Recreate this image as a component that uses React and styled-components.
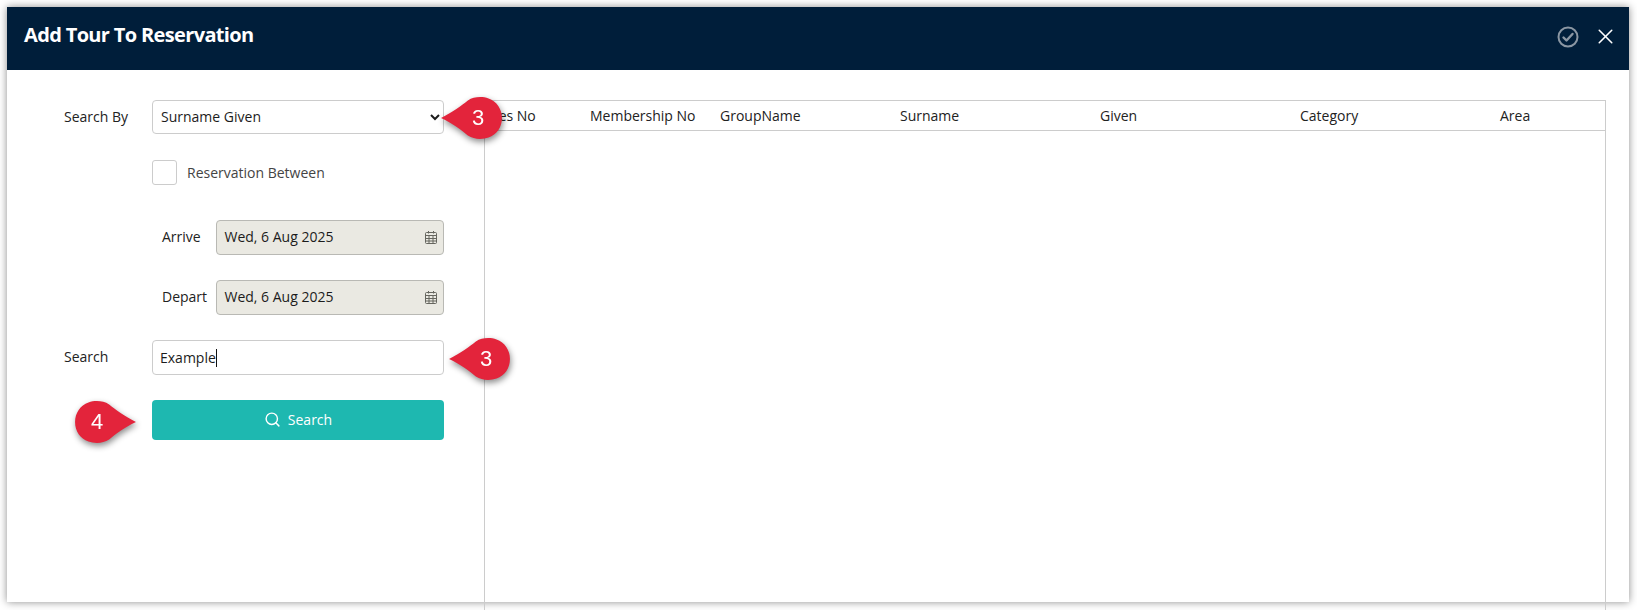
import React from 'react'
import styled, { createGlobalStyle } from 'styled-components'
import { Search, X } from 'lucide-react'

const GlobalStyle = createGlobalStyle`
  html, body {
    margin: 0;
    padding: 0;
    background: #fff;
    font-family: "Open Sans", "Liberation Sans", sans-serif;
    font-size: 14px;
    color: #1c1c1c;
  }
  * { box-sizing: border-box; }
`

const Page = styled.div`
  position: relative;
  width: 1637px;
  height: 610px;
  padding: 7px 8px 8px 7px;
  overflow: hidden;
`

const Dialog = styled.div`
  display: flex;
  flex-direction: column;
  height: 595px;
  background: #fff;
  box-shadow: 0 0 8px rgba(0, 0, 0, 0.45);
`

const Header = styled.header`
  display: flex;
  align-items: center;
  justify-content: space-between;
  height: 63px;
  padding: 0 11px 4px 17px;
  background: #001e3a;
  color: #fff;
`

const Title = styled.h1`
  margin: 0 0 5px;
  font-size: 20px;
  font-weight: 700;
  letter-spacing: -0.65px;
`

const HeaderActions = styled.div`
  display: flex;
  align-items: center;
  gap: 13px;
`

const Content = styled.div`
  display: flex;
  flex: 1;
  min-height: 0;
`

const FormPanel = styled.div`
  flex: none;
  display: flex;
  flex-direction: column;
  width: 477px;
  padding: 30px 0 0 57px;
`

const Row = styled.div`
  display: flex;
  align-items: center;
  height: ${(props) => props.$height || 34}px;
  margin-top: ${(props) => props.$top || 0}px;
  padding-left: ${(props) => props.$indent || 0}px;
`

const Label = styled.label`
  flex: none;
  width: ${(props) => props.$width || 88}px;
  padding-bottom: 2px;
  color: #222;
`

const Select = styled.select`
  width: 292px;
  height: 34px;
  padding: 0 2px 2px 4px;
  border: 1px solid #ccc;
  border-radius: 4px;
  background: #fff;
  font: inherit;
  color: #1c1c1c;
  outline: none;
`

const CheckBox = styled.span`
  flex: none;
  width: 25px;
  height: 25px;
  border: 1px solid #ccc;
  border-radius: 3px;
  background: #fff;
`

const CheckLabel = styled.span`
  margin-left: 10px;
  color: #444;
`

const DateField = styled.div`
  display: flex;
  align-items: center;
  justify-content: space-between;
  width: 228px;
  height: 35px;
  padding: 0 5px 2px 7.5px;
  border: 1px solid #b9b9b4;
  border-radius: 4px;
  background: #eae9e2;
  color: #1c1c1c;
`

const TextField = styled.div`
  display: flex;
  align-items: center;
  width: 292px;
  height: 35px;
  padding: 0 7px;
  border: 1px solid #ccc;
  border-radius: 4px;
  background: #fff;
`

const Caret = styled.span`
  width: 1px;
  height: 18px;
  background: #111;
`

const SearchButton = styled.button`
  display: flex;
  align-items: center;
  justify-content: center;
  gap: 7px;
  width: 292px;
  height: 40px;
  padding: 0 0 2px;
  border: 0;
  border-radius: 4px;
  background: #1eb8b0;
  color: #fff;
  font: inherit;
`

const TablePanel = styled.div`
  flex: none;
  width: 1122px;
  height: 100%;
  margin-top: 30px;
  border: 1px solid #ccc;
  border-bottom: 0;
`

const TableHead = styled.div`
  display: grid;
  grid-template-columns: 105px 130px 180px 200px 200px 200px 1fr;
  align-items: center;
  height: 30px;
  border-bottom: 1px solid #ccc;
  font-weight: 500;
  color: #222;
`

const HeadCell = styled.span`
  white-space: nowrap;
  padding-left: ${(props) => props.$pad || 0}px;
`

const MarkerWrap = styled.div`
  position: absolute;
  left: ${(props) => props.$x}px;
  top: ${(props) => props.$y}px;
  width: 64px;
  height: 44px;
  filter: drop-shadow(1px 3px 3px rgba(0, 0, 0, 0.45));
`

const MarkerNumber = styled.span`
  position: absolute;
  top: 0;
  left: ${(props) => (props.$flip ? 13 : 27)}px;
  width: 22px;
  line-height: 43px;
  text-align: center;
  font-family: "Liberation Sans", Arial, sans-serif;
  font-size: 22px;
  color: #fff;
`

// teardrop callout, tip on the left unless flipped
const Marker = ({ x, y, n, flip }) => (
  <MarkerWrap $x={x} $y={y}>
    <svg width="64" height="44" viewBox="0 0 62 42" style={{ display: 'block' }}>
      <path
        transform={flip ? 'translate(62 0) scale(-1 1)' : undefined}
        d="M1 21 C12 15 21 9 27 4 C33 0 41 0 47 2 C55 5 60 12 60 21 C60 30 55 37 47 40 C41 42 33 42 27 38 C21 33 12 26 1 21 Z"
        fill="#e3243b"
      />
    </svg>
    <MarkerNumber $flip={flip}>{n}</MarkerNumber>
  </MarkerWrap>
)

const CalendarIcon = () => (
  <svg width="14" height="16" viewBox="0 0 14 16" fill="none" stroke="#66665f" strokeWidth="1">
    <rect x="1.5" y="3.5" width="11" height="11" rx="1" />
    <path d="M1.5 6.5h11M1.5 9.5h11M1.5 12h11M5 6.5v8M9 6.5v8M4.5 2v2.5M9.5 2v2.5" />
  </svg>
)

const ConfirmIcon = () => (
  <svg width="24" height="24" viewBox="0 0 24 24" fill="none" stroke="#8b97a3" strokeWidth="2">
    <circle cx="12" cy="12" r="9.5" />
    <path d="M7.5 12.5l3 3 6-6.5" strokeWidth="2.4" strokeLinecap="round" strokeLinejoin="round" />
  </svg>
)

const columns = [
  { name: 'Res No', pad: 5 },
  { name: 'Membership No' },
  { name: 'GroupName' },
  { name: 'Surname' },
  { name: 'Given' },
  { name: 'Category' },
  { name: 'Area' },
]

const App = () => (
  <Page>
    <GlobalStyle />
    <Dialog>
      <Header>
        <Title>Add Tour To Reservation</Title>
        <HeaderActions>
          <ConfirmIcon />
          <X size={25} color="#fff" strokeWidth={1.5} />
        </HeaderActions>
      </Header>
      <Content>
        <FormPanel>
          <Row>
            <Label>Search By</Label>
            <Select defaultValue="surname">
              <option value="surname">Surname Given</option>
            </Select>
          </Row>
          <Row $height={25} $top={26}>
            <Label />
            <CheckBox />
            <CheckLabel>Reservation Between</CheckLabel>
          </Row>
          <Row $height={35} $top={35} $indent={98}>
            <Label $width={54}>Arrive</Label>
            <DateField>
              Wed, 6 Aug 2025
              <CalendarIcon />
            </DateField>
          </Row>
          <Row $height={35} $top={25} $indent={98}>
            <Label $width={54}>Depart</Label>
            <DateField>
              Wed, 6 Aug 2025
              <CalendarIcon />
            </DateField>
          </Row>
          <Row $height={35} $top={25}>
            <Label>Search</Label>
            <TextField>
              Example
              <Caret />
            </TextField>
          </Row>
          <Row $height={40} $top={25}>
            <Label />
            <SearchButton>
              <Search size={17} strokeWidth={2} />
              Search
            </SearchButton>
          </Row>
        </FormPanel>
        <TablePanel>
          <TableHead>
            {columns.map((col) => (
              <HeadCell key={col.name} $pad={col.pad}>
                {col.name}
              </HeadCell>
            ))}
          </TableHead>
        </TablePanel>
      </Content>
    </Dialog>
    <Marker x={440} y={96} n="3" />
    <Marker x={448} y={337} n="3" />
    <Marker x={73} y={400} n="4" flip />
  </Page>
)

export default App
